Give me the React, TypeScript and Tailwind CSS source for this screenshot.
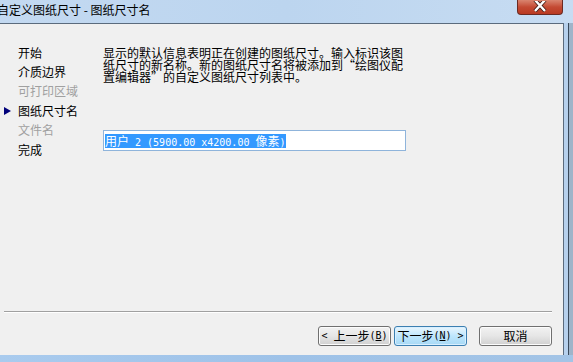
import React from 'react';

const navItems = [
    { label: '开始', disabled: false, current: false },
    { label: '介质边界', disabled: false, current: false },
    { label: '可打印区域', disabled: true, current: false },
    { label: '图纸尺寸名', disabled: false, current: true },
    { label: '文件名', disabled: true, current: false },
    { label: '完成', disabled: false, current: false },
];

const font = "font-['SimSun','Noto_Sans_CJK_SC',sans-serif]";

// half-width latin, like the SimSun bitmap font
const Mono: React.FC<{ children: React.ReactNode }> = ({ children }) => (
    <span className="font-['DejaVu_Sans_Mono',monospace] text-[10px] whitespace-pre">{children}</span>
);

// Win7 style push button
const WinButton: React.FC<{ children: React.ReactNode; focused?: boolean }> = ({ children, focused }) => (
    <button
        className={
            focused
                ? 'w-[73px] h-[20px] rounded-[3px] border border-[#3c7fb1] bg-gradient-to-b from-[#eaf6fd] via-[#bee6fd] to-[#a7d9f5] shadow-[inset_0_0_0_1px_#d8efff] text-[12px] text-black leading-none flex items-center justify-center'
                : 'w-[73px] h-[20px] rounded-[3px] border border-[#707070] bg-gradient-to-b from-[#f2f2f2] via-[#e6e6e6] to-[#d0d0d0] shadow-[inset_0_0_0_1px_#fcfcfc] text-[12px] text-black leading-none flex items-center justify-center'
        }
    >
        {children}
    </button>
);

export default function App() {
    return (
        <div className={`w-[573px] h-[362px] overflow-hidden flex flex-col bg-[#a9c8ea] ${font}`}>
            {/* Title bar */}
            <div className="h-[23px] flex items-start justify-between bg-gradient-to-r from-[#c3d9f1] via-[#bcd5ef] to-[#c7dcf2]">
                <span className="text-[12px] leading-[12px] mt-[4px] ml-[-3px] text-black whitespace-nowrap">
                    自定义图纸尺寸 - 图纸尺寸名
                </span>
                <div className="mr-[10px] w-[46px] h-[15px] rounded-b-[4px] border border-t-0 border-[#6b2a22] bg-gradient-to-b from-[#d9846f] via-[#c44a33] to-[#b93a22] flex items-end justify-center overflow-hidden">
                    <svg width="14" height="11" viewBox="0 0 14 11" className="mb-[2px]">
                        <path d="M2 -1 L12 10 M12 -1 L2 10" stroke="#3b1a14" strokeWidth="4" />
                        <path d="M2 -1 L12 10 M12 -1 L2 10" stroke="#ffffff" strokeWidth="2.4" />
                    </svg>
                </div>
            </div>

            <div className="flex flex-1">
                {/* Client area */}
                <div className="w-[564px] h-[332px] bg-[#f0f0f0] border-t border-r border-[#5b6b7d] flex flex-col">
                    <div className="flex">
                        {/* Wizard steps */}
                        <div className="w-[103px] pt-[19px]">
                            {navItems.map((item) => (
                                <div key={item.label} className="h-[19.4px] flex items-center text-[12px] leading-none">
                                    <span className="w-[18px] pl-[4px] flex items-center">
                                        {item.current && (
                                            <svg width="7" height="8" viewBox="0 0 7 8">
                                                <polygon points="0,0 7,4 0,8" fill="#00007a" />
                                            </svg>
                                        )}
                                    </span>
                                    <span className={item.disabled ? 'text-[#a0a0a0]' : 'text-black'}>{item.label}</span>
                                </div>
                            ))}
                        </div>

                        {/* Page content */}
                        <div className="pt-[23px] w-[303px] flex flex-col">
                            <p className="text-[12px] leading-[12px] text-black w-[302px] break-all">
                                显示的默认信息表明正在创建的图纸尺寸。输入标识该图纸尺寸的新名称。新的图纸尺寸名将被添加到“绘图仪配置编辑器”的自定义图纸尺寸列表中。
                            </p>
                            <div className="mt-[47px] h-[21px] w-[303px] border border-[#8fb4db] bg-white flex items-center px-[1px]">
                                <span className="bg-[#3399ff] text-white text-[12px] leading-[14px] h-[14px] whitespace-nowrap">
                                    用户<Mono> 2 (5900.00 x4200.00 </Mono>像素<Mono>)</Mono>
                                </span>
                            </div>
                        </div>
                    </div>

                    <div className="flex-1" />

                    {/* Separator */}
                    <div className="ml-[4px] mr-[11px] border-t border-[#a0a0a0] border-b border-b-white" />

                    {/* Buttons */}
                    <div className="flex justify-end items-center mt-[13px] mb-[9px] mr-[11px]">
                        <WinButton>
                            <Mono>&lt; </Mono>上一步<Mono>(<u>B</u>)</Mono>
                        </WinButton>
                        <div className="w-[3px]" />
                        <WinButton focused>
                            下一步<Mono>(<u>N</u>) &gt;</Mono>
                        </WinButton>
                        <div className="w-[12px]" />
                        <WinButton>取消</WinButton>
                    </div>
                </div>

                {/* Right window frame */}
                <div className="flex-1 flex">
                    <div className="w-[4px] bg-[#b7d1ed]" />
                    <div className="w-[1px] bg-[#3a4a5c]" />
                    <div className="flex-1 bg-[#9fb4c9]" />
                </div>
            </div>

            {/* Bottom window frame */}
            <div className="h-[7px] bg-gradient-to-r from-[#a9cbee] via-[#9ec2e8] to-[#a3c4e6]" />
        </div>
    );
}
